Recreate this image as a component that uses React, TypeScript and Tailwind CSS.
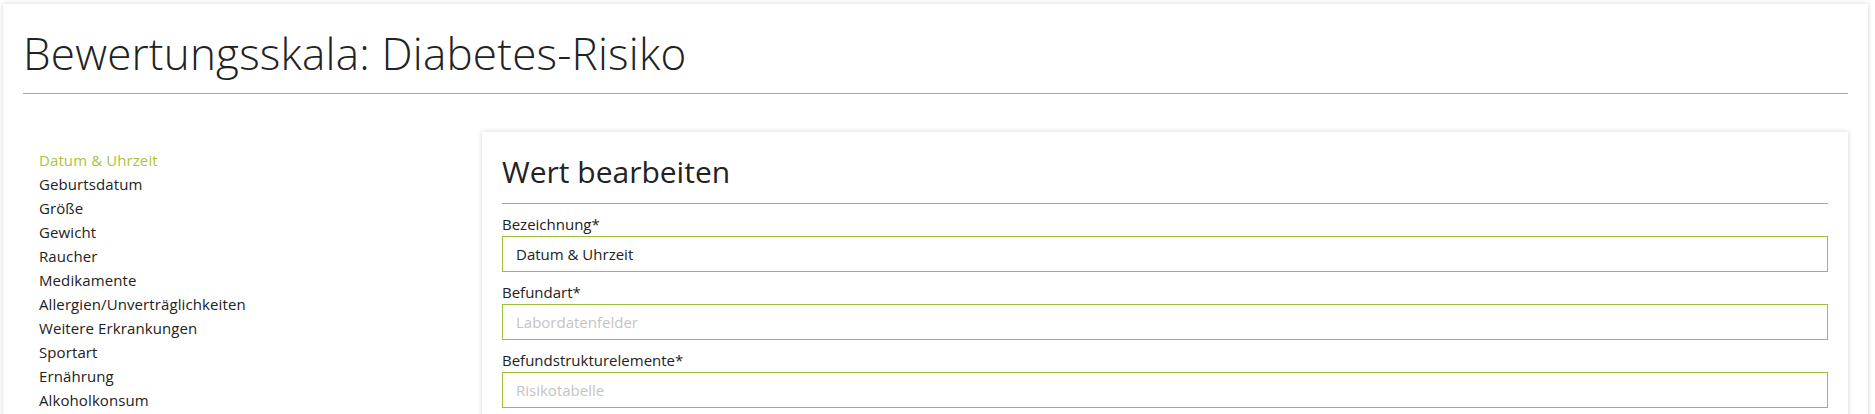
import React from "react";

const items = [
  "Datum & Uhrzeit",
  "Geburtsdatum",
  "Größe",
  "Gewicht",
  "Raucher",
  "Medikamente",
  "Allergien/Unverträglichkeiten",
  "Weitere Erkrankungen",
  "Sportart",
  "Ernährung",
  "Alkoholkonsum",
];

function Field({ label, value, placeholder }: { label: string; value?: string; placeholder?: string }) {
  return (
    <div className="pt-[10px]">
      <label className="block text-[15px] leading-[20px] mb-[2px] text-[#222]">{label}</label>
      <input
        readOnly
        value={value ?? ""}
        placeholder={placeholder}
        className="block w-full h-[36px] border border-[#9bc13c] px-[13px] text-[15px] text-[#222] placeholder:text-[#c4c4c4] outline-none bg-white"
      />
    </div>
  );
}

export default function App() {
  return (
    <div className="min-h-screen bg-white pl-[3px] pr-[7px] pt-[4px] font-['Open_Sans',sans-serif] text-[#222]">
      <div className="bg-white shadow-[0_0_5px_rgba(0,0,0,0.18)] px-[20px] pb-[60px]">
        <h1 className="text-[44px] leading-[52px] font-light tracking-[0.2px] pt-[23px] pb-[14px] border-b border-[#9bc13c] text-[#222]">
          Bewertungsskala: Diabetes-Risiko
        </h1>
        <div className="flex mt-[38px]">
          <nav className="w-[459px] shrink-0 pt-[16px] pl-[16px]">
            <ul>
              {items.map((it, i) => (
                <li
                  key={it}
                  className={
                    "text-[15px] leading-[24px] tracking-[0.1px] " + (i === 0 ? "text-[#aac33a]" : "text-[#222]")
                  }
                >
                  {it}
                </li>
              ))}
            </ul>
          </nav>
          <div className="flex-1 bg-white shadow-[0_0_5px_rgba(0,0,0,0.18)] px-[20px] pb-[60px]">
            <h2 className="text-[30px] leading-[36px] pt-[22px] pb-[13px] border-b border-[#9bc13c] text-[#222]">
              Wert bearbeiten
            </h2>
            <Field label="Bezeichnung*" value="Datum & Uhrzeit" />
            <Field label="Befundart*" placeholder="Labordatenfelder" />
            <Field label="Befundstrukturelemente*" placeholder="Risikotabelle" />
          </div>
        </div>
      </div>
    </div>
  );
}
